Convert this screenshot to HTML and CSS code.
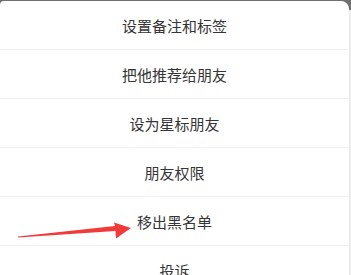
FILE: index.html
```html
<!DOCTYPE html>
<html lang="zh">
<head>
<meta charset="utf-8">
<link rel="stylesheet" href="styles.css">
</head>
<body>
<div class="screen">
  <div class="sheet">
    <div class="row">设置备注和标签</div>
    <div class="row">把他推荐给朋友</div>
    <div class="row">设为星标朋友</div>
    <div class="row">朋友权限</div>
    <div class="row">移出黑名单</div>
    <div class="row">投诉</div>
  </div>
  <svg class="arrow" width="351" height="275" viewBox="0 0 351 275">
    <polygon points="18,236.5 115,226 114,222.5 131,228 116,238.5 115.5,231 18,237.5" fill="#f23a3a"/>
  </svg>
</div>
</body>
</html>
```
FILE: styles.css
```css
html, body {
  margin: 0;
  padding: 0;
}
body {
  width: 351px;
  height: 275px;
  overflow: hidden;
  background: #ececec;
}
.screen {
  position: relative;
  width: 351px;
  height: 275px;
  background: linear-gradient(#6f6f6f 0, #6f6f6f 10px, #ececec 10px);
  padding-top: 1px;
  box-sizing: border-box;
}
.sheet {
  width: 349px;
  background: #ffffff;
  border-radius: 4px 8px 0 0;
  display: flex;
  flex-direction: column;
}
.row {
  height: 48px;
  border-bottom: 1px solid #f1f1f1;
  display: flex;
  align-items: center;
  justify-content: center;
  font-family: "Noto Sans CJK SC", "Noto Sans", sans-serif;
  font-size: 15px;
  color: #353535;
  letter-spacing: 0;
}
.arrow {
  position: absolute;
  left: 0;
  top: 0;
}
```
